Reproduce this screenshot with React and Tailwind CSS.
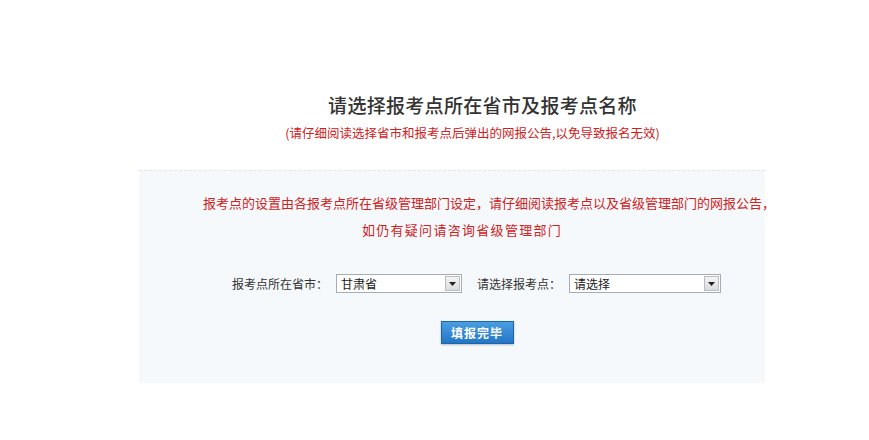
const font = { fontFamily: '"Noto Sans CJK SC", "Microsoft YaHei", sans-serif' }

function SelectBox({ value, width }) {
  return (
    <div
      className={`flex h-[19px] items-center border border-[#a5acb5] bg-white ${width}`}
    >
      <span className="flex-1 pl-[4px] text-[12px] leading-none text-[#222]">{value}</span>
      <span className="mr-[1px] flex h-[15px] w-[15px] items-center justify-center border border-[#b9bec5] bg-gradient-to-b from-[#f4f4f4] to-[#dcdcdc]">
        <svg width="7" height="4" viewBox="0 0 7 4">
          <path d="M0 0h7L3.5 4z" fill="#222" />
        </svg>
      </span>
    </div>
  )
}

export default function App() {
  return (
    <div className="h-[440px] w-[869px] overflow-hidden bg-white" style={font}>
      <div className="flex flex-col items-center pt-[93px]">
        <h1 className="pl-[96px] text-[19px] leading-[24px] font-medium tracking-[0.3px] text-[#333]">
          请选择报考点所在省市及报考点名称
        </h1>
        <p className="mt-[8px] pl-[76px] text-[12.5px] leading-[16px] text-[#d0211c]">
          (请仔细阅读选择省市和报考点后弹出的网报公告,以免导致报名无效)
        </p>
      </div>

      <div className="ml-[139px] mt-[29px] h-[213px] w-[626px] border-t border-dashed border-[#dfe5ec] bg-[#f6f9fc]">
        <div className="flex flex-col items-center whitespace-nowrap pt-[18px] text-[13px] leading-[27px] text-[#d0211c]">
          <p className="pl-[74px]">
            报考点的设置由各报考点所在省级管理部门设定，请仔细阅读报考点以及省级管理部门的网报公告，
          </p>
          <p className="pl-[20px] tracking-[1.3px]">如仍有疑问请咨询省级管理部门</p>
        </div>

        <div className="mt-[31px] flex items-center pl-[93px] text-[12px] text-[#333]">
          <span>报考点所在省市：</span>
          <div className="ml-[8px]">
            <SelectBox value="甘肃省" width="w-[126px]" />
          </div>
          <span className="ml-[15px]">请选择报考点：</span>
          <div className="ml-[8px]">
            <SelectBox value="请选择" width="w-[152px]" />
          </div>
        </div>

        <div className="mt-[28px] flex justify-center pl-[50px]">
          <button
            type="button"
            className="h-[23px] w-[73px] border border-[#1d64a8] bg-gradient-to-b from-[#4b9ee0] to-[#2276c6] text-[12px] font-bold tracking-[1px] text-white shadow-[0_1px_2px_rgba(0,0,0,0.25)]"
          >
            填报完毕
          </button>
        </div>
      </div>
    </div>
  )
}
